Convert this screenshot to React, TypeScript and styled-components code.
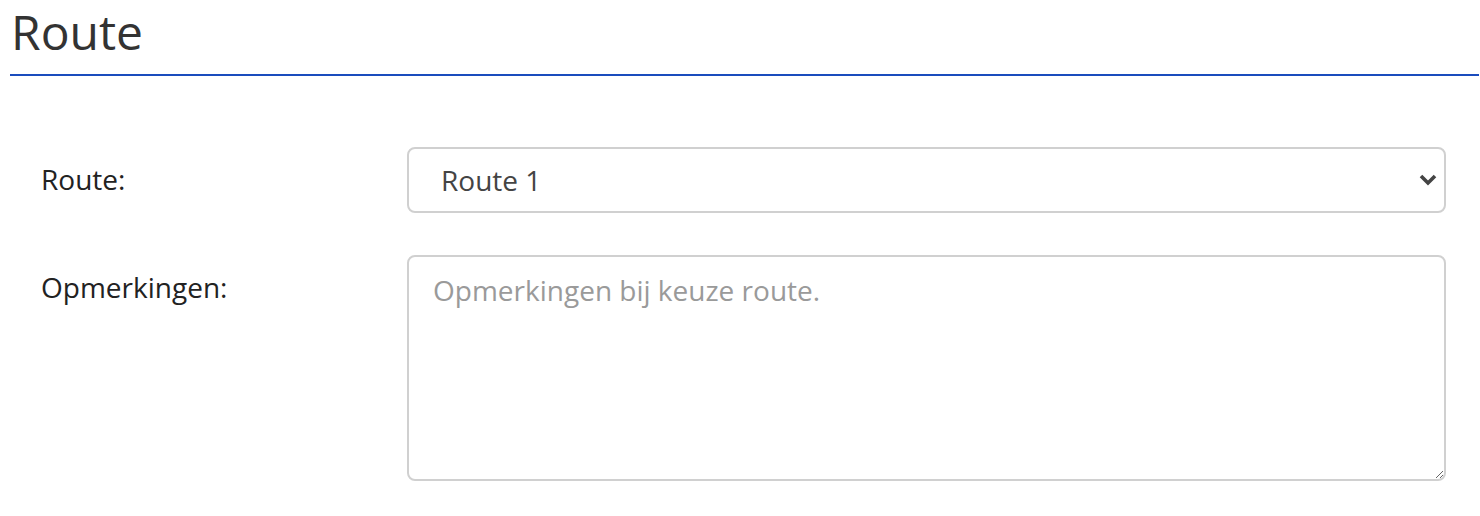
import React from "react";
import styled, { createGlobalStyle } from "styled-components";

const GlobalStyle = createGlobalStyle`
  body {
    margin: 0;
    background: #ffffff;
    font-family: "Open Sans", "Liberation Sans", sans-serif;
    color: #212529;
  }
`;

const Page = styled.div`
  padding: 0 1px 0 10px;
`;

const Header = styled.div`
  border-bottom: 2px solid #1a4cbd;
  height: 76px;
  box-sizing: border-box;
`;

const Title = styled.h2`
  margin: 0;
  padding: 0 0 0 1px;
  font-size: 48px;
  font-weight: 400;
  line-height: 64px;
  color: #333333;
`;

const Form = styled.div`
  display: grid;
  grid-template-columns: 366px 1fr;
  row-gap: 42px;
  padding: 71px 33px 0 31px;
`;

const Label = styled.label<{ $top: number }>`
  font-size: 28px;
  line-height: 38px;
  color: #222222;
  padding-top: ${(p) => p.$top}px;
`;

const SelectWrap = styled.div`
  position: relative;
`;

const Select = styled.select`
  appearance: none;
  width: 100%;
  height: 66px;
  box-sizing: border-box;
  border: 2px solid #d0d0d0;
  border-radius: 8px;
  background: #ffffff;
  padding: 0 60px 0 32px;
  font-family: "Open Sans", "Liberation Sans", sans-serif;
  font-size: 28px;
  color: #444444;
  outline: none;
`;

const Chevron = styled.svg`
  position: absolute;
  right: 9px;
  top: 27px;
  width: 18px;
  height: 12px;
  pointer-events: none;
`;

const TextArea = styled.textarea`
  width: 100%;
  height: 226px;
  box-sizing: border-box;
  border: 2px solid #d0d0d0;
  border-radius: 8px;
  padding: 14px 24px;
  font-family: "Open Sans", "Liberation Sans", sans-serif;
  font-size: 28px;
  line-height: 38px;
  color: #444444;
  outline: none;
  resize: vertical;
  display: block;

  &::placeholder {
    color: #9a9a9a;
  }
`;

export default function App() {
  return (
    <Page>
      <GlobalStyle />
      <Header>
        <Title>Route</Title>
      </Header>
      <Form>
        <Label $top={13}>Route:</Label>
        <SelectWrap>
          <Select defaultValue="1">
            <option value="1">Route 1</option>
            <option value="2">Route 2</option>
          </Select>
          <Chevron viewBox="0 0 18 12">
            <path d="M2 2 L9 9 L16 2" fill="none" stroke="#444444" strokeWidth="3.6" />
          </Chevron>
        </SelectWrap>
        <Label $top={13}>Opmerkingen:</Label>
        <TextArea placeholder="Opmerkingen bij keuze route." />
      </Form>
    </Page>
  );
}
